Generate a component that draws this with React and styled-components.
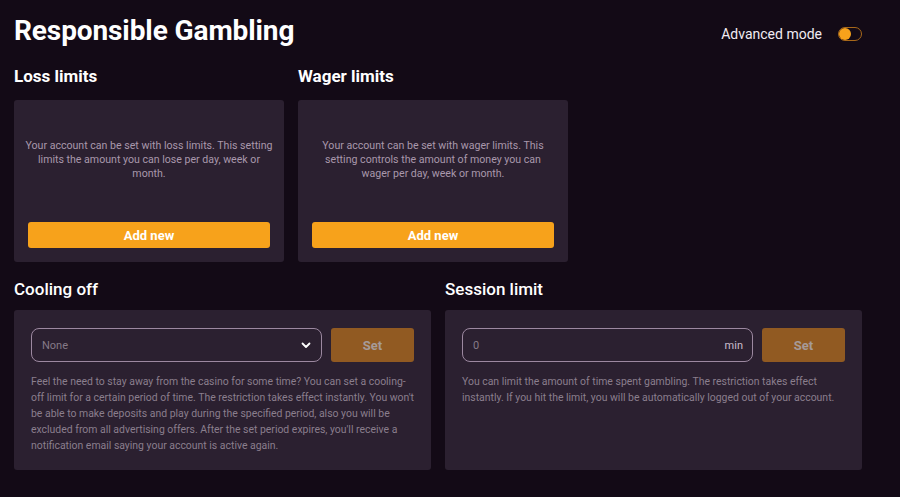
import React from 'react';
import styled, { createGlobalStyle } from 'styled-components';

const GlobalStyle = createGlobalStyle`
  html, body {
    margin: 0;
    padding: 0;
    background: #130a16;
    font-family: Roboto, "Liberation Sans", Arial, sans-serif;
  }
`;

const Page = styled.div`
  width: 900px;
  height: 497px;
  box-sizing: border-box;
  padding: 12px 38px 0 14px;
  background: #130a16;
  color: #fff;
  overflow: hidden;
`;

const Header = styled.div`
  display: flex;
  justify-content: space-between;
  align-items: center;
  height: 36px;
`;

const Title = styled.h1`
  margin: 0;
  font-size: 28px;
  font-weight: 700;
  letter-spacing: -0.1px;
`;

const ModeSwitch = styled.label`
  display: flex;
  align-items: center;
  gap: 16px;
  font-size: 14px;
  color: #f1ecf2;
  margin-top: 8px;
`;

const Toggle = styled.span`
  width: 22px;
  height: 12px;
  border: 1.5px solid #a8681a;
  border-radius: 8px;
  position: relative;

  &::after {
    content: '';
    position: absolute;
    left: 0px;
    top: 0px;
    width: 12px;
    height: 12px;
    border-radius: 50%;
    background: #f7a21b;
  }
`;

const LimitRow = styled.div`
  display: flex;
  gap: 14px;
  margin-top: 18px;
`;

const Column = styled.div`
  display: flex;
  flex-direction: column;
  width: ${(p) => p.width || 'auto'};
  flex: ${(p) => (p.width ? 'none' : 1)};
`;

const SectionTitle = styled.h2`
  margin: 0 0 ${(p) => p.gap || 14}px;
  font-size: 17px;
  font-weight: ${(p) => p.weight || 700};
  line-height: 20px;
`;

const Card = styled.div`
  background: #2b2030;
  border-radius: 3px;
  box-sizing: border-box;
  height: ${(p) => p.height}px;
  padding: ${(p) => p.pad};
  display: flex;
  flex-direction: column;
`;

const CenterText = styled.p`
  flex: 1;
  margin: 0 ${(p) => (p.wide ? -5 : 0)}px;
  display: flex;
  align-items: center;
  justify-content: center;
  text-align: center;
  font-size: 10.6px;
  line-height: 14px;
  color: #a998ac;
  padding: 0 0 16px;
`;

const AddButton = styled.button`
  height: 26px;
  flex-shrink: 0;
  border: none;
  border-radius: 3px;
  background: #f7a21b;
  color: #fff;
  font-family: inherit;
  font-size: 13px;
  font-weight: 700;
`;

const BottomRow = styled.div`
  display: flex;
  gap: 14px;
  margin-top: 17px;
`;

const Controls = styled.div`
  display: flex;
  flex-shrink: 0;
  gap: 9px;
  height: 34px;
`;

const Field = styled.div`
  flex: 1;
  display: flex;
  align-items: center;
  justify-content: space-between;
  border: 1px solid #9c88a0;
  border-radius: 8px;
  padding: 0 9px 0 10px;
  font-size: 11px;
  color: #857a87;
`;

const Unit = styled.span`
  color: #c9bccb;
  font-size: 11px;
`;

const SetButton = styled.button`
  width: 83px;
  border: none;
  border-radius: 3px;
  background: #915a22;
  color: #a69a98;
  font-family: inherit;
  font-size: 13px;
  font-weight: 700;
`;

const Note = styled.p`
  margin: 12px -4px 0 0;
  font-size: 10.45px;
  line-height: 16px;
  color: #8a7e8d;
`;

function Chevron() {
  return (
    <svg width="12" height="12" viewBox="0 0 12 12">
      <path d="M2.5 4.5 L6 8 L9.5 4.5" fill="none" stroke="#fff" strokeWidth="1.8" strokeLinecap="round" strokeLinejoin="round" />
    </svg>
  );
}

function App() {
  return (
    <Page>
      <GlobalStyle />
      <Header>
        <Title>Responsible Gambling</Title>
        <ModeSwitch>
          Advanced mode
          <Toggle />
        </ModeSwitch>
      </Header>

      <LimitRow>
        <Column width="270px">
          <SectionTitle>Loss limits</SectionTitle>
          <Card height={162} pad="14px">
            <CenterText wide>
              Your account can be set with loss limits. This setting limits the amount you can lose per day, week or month.
            </CenterText>
            <AddButton>Add new</AddButton>
          </Card>
        </Column>
        <Column width="270px">
          <SectionTitle>Wager limits</SectionTitle>
          <Card height={162} pad="14px">
            <CenterText>
              Your account can be set with wager limits. This setting controls the amount of money you can wager per day, week or month.
            </CenterText>
            <AddButton>Add new</AddButton>
          </Card>
        </Column>
      </LimitRow>

      <BottomRow>
        <Column>
          <SectionTitle weight={500} gap={11}>Cooling off</SectionTitle>
          <Card height={160} pad="18px 17px">
            <Controls>
              <Field>
                None
                <Chevron />
              </Field>
              <SetButton>Set</SetButton>
            </Controls>
            <Note>
              Feel the need to stay away from the casino for some time? You can set a cooling-off limit for a certain period of time. The restriction takes effect instantly. You won't be able to make deposits and play during the specified period, also you will be excluded from all advertising offers. After the set period expires, you'll receive a notification email saying your account is active again.
            </Note>
          </Card>
        </Column>
        <Column>
          <SectionTitle weight={500} gap={11}>Session limit</SectionTitle>
          <Card height={160} pad="18px 17px">
            <Controls>
              <Field>
                0
                <Unit>min</Unit>
              </Field>
              <SetButton>Set</SetButton>
            </Controls>
            <Note>
              You can limit the amount of time spent gambling. The restriction takes effect instantly. If you hit the limit, you will be automatically logged out of your account.
            </Note>
          </Card>
        </Column>
      </BottomRow>
    </Page>
  );
}

export default App;
